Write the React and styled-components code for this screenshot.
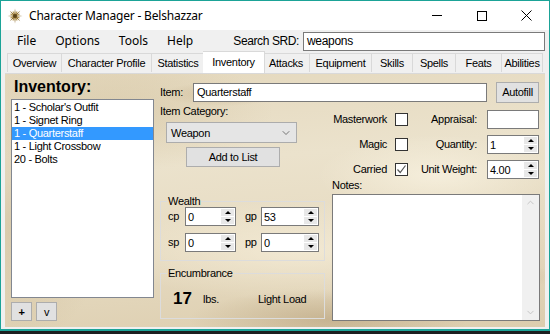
import React from "react";
import styled, { createGlobalStyle } from "styled-components";
import { ChevronDown, ChevronUp } from "lucide-react";

const GlobalStyle = createGlobalStyle`
  html, body {
    margin: 0;
    padding: 0;
    background: #1c1f1f;
  }
  * {
    box-sizing: border-box;
  }
`;

const Window = styled.div`
  width: 550px;
  height: 331px;
  display: flex;
  flex-direction: column;
  background: #f0f0f0;
  border: 1px solid #1ba397;
  border-bottom-width: 2px;
  font-family: "Liberation Sans", Arial, sans-serif;
  font-size: 11px;
  letter-spacing: -0.3px;
  color: #000;
`;

const TitleBar = styled.div`
  height: 29px;
  flex: none;
  display: flex;
  align-items: center;
  background: #fff;
`;

const AppIcon = styled.svg`
  margin-left: 6px;
  flex: none;
`;

const Title = styled.div`
  margin-left: 6px;
  font-family: "Noto Sans", sans-serif;
  font-size: 12px;
  letter-spacing: -0.2px;
  flex: 1;
`;

const WinButton = styled.div`
  width: 45px;
  height: 29px;
  display: flex;
  align-items: center;
  justify-content: center;
`;

const MinLine = styled.div`
  width: 10px;
  height: 1px;
  background: #000;
`;

const MaxBox = styled.div`
  width: 10px;
  height: 10px;
  border: 1px solid #000;
`;

const MenuBar = styled.div`
  height: 21px;
  flex: none;
  display: flex;
  align-items: center;
  padding-left: 16px;
  gap: 19px;
`;

const MenuItem = styled.span`
  font-family: "Noto Sans", sans-serif;
  font-size: 12px;
  letter-spacing: 0;
`;

const SearchGroup = styled.div`
  margin-left: auto;
  margin-right: 4px;
  display: flex;
  align-items: center;
  gap: 4px;
  margin-top: 1px;
`;

const SearchLabel = styled.span`
  font-size: 12px;
  letter-spacing: -0.4px;
`;

const TextBox = styled.div`
  width: ${(p) => p.$w}px;
  height: 19px;
  flex: none;
  background: #fff;
  border: 1px solid #7a7a7a;
  display: flex;
  align-items: center;
  padding-left: 3px;
  font-size: ${(p) => (p.$big ? 12 : 11)}px;
`;

const TabStrip = styled.div`
  height: 22px;
  flex: none;
  display: flex;
  align-items: flex-end;
  padding-left: 6px;
`;

const Tab = styled.div`
  width: ${(p) => p.$w + (p.$active ? 4 : 0)}px;
  height: ${(p) => (p.$active ? 22 : 19)}px;
  margin: 0 ${(p) => (p.$active ? -2 : 0)}px;
  margin-bottom: ${(p) => (p.$active ? 0 : 1)}px;
  position: relative;
  z-index: ${(p) => (p.$active ? 1 : 0)};
  background: ${(p) => (p.$active ? "#fff" : "#f0f0f0")};
  border: 1px solid #d9d9d9;
  border-bottom: none;
  display: flex;
  align-items: center;
  justify-content: center;
  padding-bottom: ${(p) => (p.$active ? 2 : 0)}px;
  & + & {
    border-left: ${(p) => (p.$active ? "1px solid #d9d9d9" : "none")};
  }
`;

const Page = styled.div`
  flex: 1;
  margin: 0 4px 2px 4px;
  display: flex;
  padding: 3px 0 0 6px;
  border-top: 1px solid #d9d9d9;
  background:
    radial-gradient(ellipse 120px 40px at 80% 40%, rgba(255, 250, 235, 0.55), transparent),
    radial-gradient(ellipse 160px 60px at 20% 15%, rgba(200, 180, 140, 0.35), transparent),
    radial-gradient(ellipse 200px 50px at 55% 70%, rgba(255, 248, 230, 0.5), transparent),
    radial-gradient(ellipse 140px 30px at 60% 97%, rgba(170, 145, 105, 0.45), transparent),
    radial-gradient(ellipse 90px 120px at 2% 60%, rgba(190, 170, 130, 0.4), transparent),
    radial-gradient(ellipse 60px 12px at 40% 8%, rgba(180, 155, 115, 0.35), transparent),
    radial-gradient(ellipse 80px 14px at 88% 80%, rgba(185, 160, 120, 0.35), transparent),
    linear-gradient(175deg, #e4d8bd 0%, #ebe2cc 35%, #e7dcc3 60%, #dccdae 100%);
`;

const LeftCol = styled.div`
  width: 143px;
  flex: none;
  display: flex;
  flex-direction: column;
`;

const Heading = styled.div`
  font-size: 16px;
  font-weight: bold;
  line-height: 19px;
  letter-spacing: 0;
  margin-left: 3px;
`;

const ListBox = styled.div`
  margin-top: 3px;
  height: 199px;
  background: #fff;
  border: 1px solid #828790;
  padding-top: 1px;
`;

const ListRow = styled.div`
  height: 13px;
  line-height: 13px;
  padding-left: 2px;
  background: ${(p) => (p.$sel ? "#3399ff" : "transparent")};
  color: ${(p) => (p.$sel ? "#fff" : "#000")};
  white-space: nowrap;
`;

const SmallButtons = styled.div`
  display: flex;
  gap: 4px;
  margin-top: 4px;
`;

const Button = styled.div`
  width: ${(p) => p.$w}px;
  height: ${(p) => p.$h || 20}px;
  margin-left: ${(p) => p.$ml || 0}px;
  margin-top: ${(p) => p.$mt || 0}px;
  background: #e1e1e1;
  border: 1px solid #adadad;
  display: flex;
  align-items: center;
  justify-content: center;
  flex: none;
  font-weight: ${(p) => (p.$bold ? "bold" : "normal")};
`;

const RightArea = styled.div`
  margin-left: 6px;
  width: 380px;
  display: flex;
  flex-direction: column;
  padding-top: 5px;
`;

const ItemRow = styled.div`
  display: flex;
  align-items: center;
  height: 20px;
`;

const Label = styled.span`
  width: ${(p) => (p.$w ? `${p.$w}px` : "auto")};
  margin-left: ${(p) => p.$ml || 0}px;
  text-align: ${(p) => (p.$right ? "right" : "left")};
  flex: none;
  line-height: 13px;
`;

const Columns = styled.div`
  display: flex;
`;

const MidCol = styled.div`
  width: 165px;
  flex: none;
  display: flex;
  flex-direction: column;
`;

const CategoryLabel = styled.div`
  margin-top: 3px;
  line-height: 13px;
`;

const Combo = styled.div`
  margin: 4px 0 0 6px;
  width: 131px;
  height: 21px;
  background: #e5e5e5;
  border: 1px solid #acacac;
  display: flex;
  align-items: center;
  justify-content: space-between;
  padding: 0 4px 0 4px;
`;

const Group = styled.fieldset`
  margin: ${(p) => p.$mt}px 0 0 0;
  padding: 0 0 ${(p) => p.$pb}px 7px;
  border: 1px solid #dcdcdc;
  min-width: 0;
  width: 165px;
`;

const Legend = styled.legend`
  padding: 0 1px;
  margin-left: -1px;
  line-height: 13px;
`;

const SpinRow = styled.div`
  display: flex;
  align-items: center;
  margin-top: ${(p) => p.$mt}px;
`;

const SpinBox = styled.div`
  width: ${(p) => p.$w}px;
  height: 19px;
  flex: none;
  margin-left: ${(p) => p.$ml || 0}px;
  background: #fff;
  border: 1px solid #7a7a7a;
  display: flex;
`;

const SpinValue = styled.div`
  flex: 1;
  display: flex;
  align-items: center;
  padding-left: 2px;
`;

const SpinButtons = styled.div`
  width: 15px;
  display: flex;
  flex-direction: column;
  padding: 1px;
  gap: 1px;
`;

const SpinHalf = styled.div`
  flex: 1;
  background: #e8e8e8;
  display: flex;
  align-items: center;
  justify-content: center;
`;

const Arrow = styled.div`
  width: 0;
  height: 0;
  border-left: 3px solid transparent;
  border-right: 3px solid transparent;
  ${(p) =>
    p.$up ? "border-bottom: 3px solid #000;" : "border-top: 3px solid #000;"}
`;

const EncRow = styled.div`
  display: flex;
  align-items: center;
  height: 20px;
  margin-top: 9px;
  padding-left: 5px;
`;

const BigNumber = styled.span`
  width: 30px;
  font-size: 17px;
  font-weight: bold;
  letter-spacing: 0;
`;

const RightCol = styled.div`
  margin-left: 7px;
  width: 208px;
  display: flex;
  flex-direction: column;
  padding-top: 8px;
`;

const OptRow = styled.div`
  display: flex;
  align-items: center;
  height: 19px;
  margin-bottom: 6px;
`;

const CheckBox = styled.div`
  width: 13px;
  height: 13px;
  margin-left: 8px;
  flex: none;
  background: #fff;
  border: 1px solid #333;
  display: flex;
  align-items: center;
  justify-content: center;
`;

const NotesLabel = styled.div`
  margin-top: -6px;
  line-height: 13px;
`;

const NotesBox = styled.div`
  margin-top: 2px;
  height: 127px;
  background: #fff;
  border: 1px solid #7a7a7a;
  display: flex;
  justify-content: flex-end;
`;

const ScrollBar = styled.div`
  width: 17px;
  background: #f0f0f0;
  display: flex;
  flex-direction: column;
  justify-content: space-between;
  align-items: center;
  padding: 2px 0;
`;

function Spinner({ w, value, ml }) {
  return (
    <SpinBox $w={w} $ml={ml}>
      <SpinValue>{value}</SpinValue>
      <SpinButtons>
        <SpinHalf>
          <Arrow $up />
        </SpinHalf>
        <SpinHalf>
          <Arrow />
        </SpinHalf>
      </SpinButtons>
    </SpinBox>
  );
}

const tabs = [
  ["Overview", 55],
  ["Character Profile", 90],
  ["Statistics", 53],
  ["Inventory", 58],
  ["Attacks", 47],
  ["Equipment", 62],
  ["Skills", 41],
  ["Spells", 43],
  ["Feats", 46],
  ["Abilities", 41],
];

const items = [
  "1 - Scholar's Outfit",
  "1 - Signet Ring",
  "1 - Quarterstaff",
  "1 - Light Crossbow",
  "20 - Bolts",
];

function SunIcon() {
  const spikes = [];
  for (let i = 0; i < 8; i++) {
    const a = (i * Math.PI) / 4;
    const b = a + Math.PI / 8;
    spikes.push(
      <path
        key={i}
        d={`M8 8 L${8 + Math.cos(a - 0.25) * 2.5} ${8 + Math.sin(a - 0.25) * 2.5} L${8 + Math.cos(a) * 7.5} ${8 + Math.sin(a) * 7.5} L${8 + Math.cos(a + 0.25) * 2.5} ${8 + Math.sin(a + 0.25) * 2.5} Z`}
        fill="#8c6a2a"
      />
    );
    spikes.push(
      <line
        key={`l${i}`}
        x1="8"
        y1="8"
        x2={8 + Math.cos(b) * 5}
        y2={8 + Math.sin(b) * 5}
        stroke="#b8994e"
        strokeWidth="1"
      />
    );
  }
  return (
    <AppIcon width="16" height="16" viewBox="0 0 16 16">
      {spikes}
      <circle cx="8" cy="8" r="2" fill="#5a4318" />
    </AppIcon>
  );
}

export default function App() {
  return (
    <>
      <GlobalStyle />
      <Window>
        <TitleBar>
          <SunIcon />
          <Title>Character Manager - Belshazzar</Title>
          <WinButton>
            <MinLine />
          </WinButton>
          <WinButton>
            <MaxBox />
          </WinButton>
          <WinButton>
            <svg width="11" height="11" viewBox="0 0 11 11">
              <path d="M0.5 0.5 L10.5 10.5 M10.5 0.5 L0.5 10.5" stroke="#000" strokeWidth="1" />
            </svg>
          </WinButton>
        </TitleBar>

        <MenuBar>
          <MenuItem>File</MenuItem>
          <MenuItem>Options</MenuItem>
          <MenuItem>Tools</MenuItem>
          <MenuItem>Help</MenuItem>
          <SearchGroup>
            <SearchLabel>Search SRD:</SearchLabel>
            <TextBox $w={242} $big>
              weapons
            </TextBox>
          </SearchGroup>
        </MenuBar>

        <TabStrip>
          {tabs.map(([name, w]) => (
            <Tab key={name} $w={w} $active={name === "Inventory"}>
              {name}
            </Tab>
          ))}
        </TabStrip>

        <Page>
          <LeftCol>
            <Heading>Inventory:</Heading>
            <ListBox>
              {items.map((it) => (
                <ListRow key={it} $sel={it === "1 - Quarterstaff"}>
                  {it}
                </ListRow>
              ))}
            </ListBox>
            <SmallButtons>
              <Button $w={21} $h={19} $bold>
                +
              </Button>
              <Button $w={21} $h={19}>
                v
              </Button>
            </SmallButtons>
          </LeftCol>

          <RightArea>
            <ItemRow>
              <Label $w={33}>Item:</Label>
              <TextBox $w={294}>Quarterstaff</TextBox>
              <Button $w={43} $h={21} $ml={9}>
                Autofill
              </Button>
            </ItemRow>

            <Columns>
              <MidCol>
                <CategoryLabel>Item Category:</CategoryLabel>
                <Combo>
                  <span>Weapon</span>
                  <ChevronDown size={12} strokeWidth={1.4} color="#444" />
                </Combo>
                <Button $w={94} $ml={26} $mt={4}>
                  Add to List
                </Button>

                <Group $mt={28} $pb={8}>
                  <Legend>Wealth</Legend>
                  <SpinRow $mt={-1}>
                    <Label $w={17}>cp</Label>
                    <Spinner w={51} value="0" />
                    <Label $w={16} $ml={9}>
                      gp
                    </Label>
                    <Spinner w={58} value="53" />
                  </SpinRow>
                  <SpinRow $mt={7}>
                    <Label $w={17}>sp</Label>
                    <Spinner w={51} value="0" />
                    <Label $w={16} $ml={9}>
                      pp
                    </Label>
                    <Spinner w={58} value="0" />
                  </SpinRow>
                </Group>

                <Group $mt={6} $pb={9}>
                  <Legend>Encumbrance</Legend>
                  <EncRow>
                    <BigNumber>17</BigNumber>
                    <Label $w={55}>lbs.</Label>
                    <Label>Light Load</Label>
                  </EncRow>
                </Group>
              </MidCol>

              <RightCol>
                <OptRow>
                  <Label $w={55} $right>
                    Masterwork
                  </Label>
                  <CheckBox />
                  <Label $w={69} $right>
                    Appraisal:
                  </Label>
                  <TextBox $w={52} style={{ marginLeft: 10 }} />
                </OptRow>
                <OptRow>
                  <Label $w={55} $right>
                    Magic
                  </Label>
                  <CheckBox />
                  <Label $w={69} $right>
                    Quantity:
                  </Label>
                  <Spinner w={52} ml={10} value="1" />
                </OptRow>
                <OptRow>
                  <Label $w={55} $right>
                    Carried
                  </Label>
                  <CheckBox>
                    <svg width="11" height="11" viewBox="0 0 11 11">
                      <path d="M1.5 5.5 L4.2 8.5 L9.5 1.5" fill="none" stroke="#555" strokeWidth="1.2" />
                    </svg>
                  </CheckBox>
                  <Label $w={69} $right>
                    Unit Weight:
                  </Label>
                  <Spinner w={52} ml={10} value="4.00" />
                </OptRow>
                <NotesLabel>Notes:</NotesLabel>
                <NotesBox>
                  <ScrollBar>
                    <ChevronUp size={11} strokeWidth={2} color="#c2c2c2" />
                    <ChevronDown size={11} strokeWidth={2} color="#c2c2c2" />
                  </ScrollBar>
                </NotesBox>
              </RightCol>
            </Columns>
          </RightArea>
        </Page>
      </Window>
    </>
  );
}
